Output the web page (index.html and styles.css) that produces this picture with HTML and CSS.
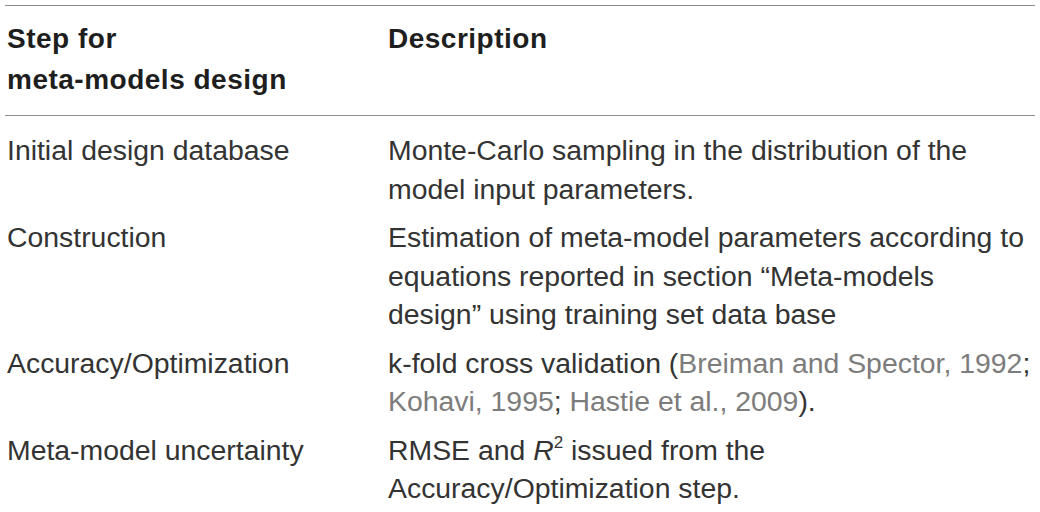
FILE: index.html
```html
<!DOCTYPE html>
<html>
<head>
<meta charset="utf-8">
<link rel="stylesheet" href="styles.css">
</head>
<body>
<table class="steps">
  <thead>
    <tr>
      <th class="col-step">Step for<br>meta-models design</th>
      <th class="col-desc">Description</th>
    </tr>
  </thead>
  <tbody>
    <tr class="first">
      <td>Initial design database</td>
      <td>Monte-Carlo sampling in the distribution of the<br>model input parameters.</td>
    </tr>
    <tr>
      <td>Construction</td>
      <td>Estimation of meta-model parameters according to<br>equations reported in section “Meta-models<br>design” using training set data base</td>
    </tr>
    <tr>
      <td>Accuracy/Optimization</td>
      <td>k-fold cross validation (<span class="cite">Breiman and Spector, 1992</span>;<br><span class="cite">Kohavi, 1995</span>; <span class="cite">Hastie et al., 2009</span>).</td>
    </tr>
    <tr>
      <td>Meta-model uncertainty</td>
      <td>RMSE and <i>R</i><sup>2</sup> issued from the<br>Accuracy/Optimization step.</td>
    </tr>
  </tbody>
</table>
</body>
</html>
```

FILE: styles.css
```css
html, body {
  margin: 0;
  padding: 0;
  background: #ffffff;
}

body {
  padding: 5px 5px 0 5px;
  font-family: "Liberation Sans", Arial, sans-serif;
  color: #333333;
}

.steps {
  width: 1030px;
  border-collapse: collapse;
  border-top: 1.5px solid #8c8c8c;
}

.steps thead th {
  text-align: left;
  vertical-align: top;
  font-weight: bold;
  font-size: 28px;
  letter-spacing: 0.5px;
  line-height: 41px;
  color: #1e1e1e;
  padding: 12px 0 15px 2px;
  border-bottom: 1.5px solid #8c8c8c;
}

.steps .col-step {
  width: 379px;
}

.steps td {
  vertical-align: top;
  font-size: 28.4px;
  line-height: 38.5px;
  padding: 5px 0 5px 2px;
  white-space: nowrap;
}

.steps tr.first td {
  padding-top: 15px;
}

.cite {
  color: #7c7c7c;
}

sup {
  font-size: 17px;
  line-height: 0;
  vertical-align: 12px;
}
```
